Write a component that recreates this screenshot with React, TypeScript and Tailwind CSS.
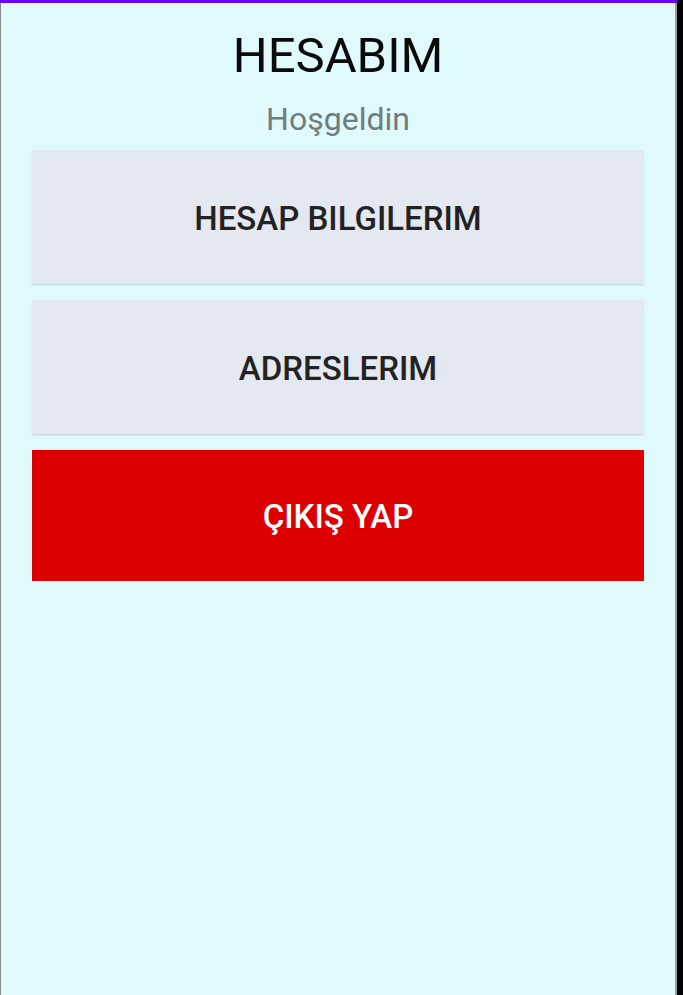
import React from "react";

export default function App() {
  return (
    <div className="w-[683px] h-[995px] flex bg-black" style={{ fontFamily: "Roboto, 'Noto Sans', sans-serif" }}>
      <div className="w-[677px] h-full flex flex-col">
        <div className="h-[3px] bg-[#6a00f4]" />
        <div className="flex-1 flex border-l border-l-[#8a8a8a] border-r-2 border-r-[#9a9a9a]">
          <div className="flex-1 bg-[#e0f9fb] flex flex-col items-center px-[31px]">
            <h1 className="mt-[25px] text-[49px] leading-[56px] text-[#0a0a0a] font-normal">HESABIM</h1>
            <p className="mt-[17px] text-[32px] leading-[36px] text-[#707c7e]">Hoşgeldin</p>
            <div className="mt-[13px] w-full flex flex-col gap-[16px]">
              <button className="w-full h-[134px] pt-[3px] bg-[#e3e8f1] text-[#222222] text-[33px] font-medium shadow-[0_1.5px_1.5px_rgba(0,0,0,0.12)]">
                HESAP BILGILERIM
              </button>
              <button className="w-full h-[134px] pt-[3px] bg-[#e3e8f1] text-[#222222] text-[33px] font-medium shadow-[0_1.5px_1.5px_rgba(0,0,0,0.12)]">
                ADRESLERIM
              </button>
              <button className="w-full h-[131px] pt-[3px] bg-[#dc0000] text-white text-[33px] font-medium">
                ÇIKIŞ YAP
              </button>
            </div>
          </div>
        </div>
      </div>
    </div>
  );
}
